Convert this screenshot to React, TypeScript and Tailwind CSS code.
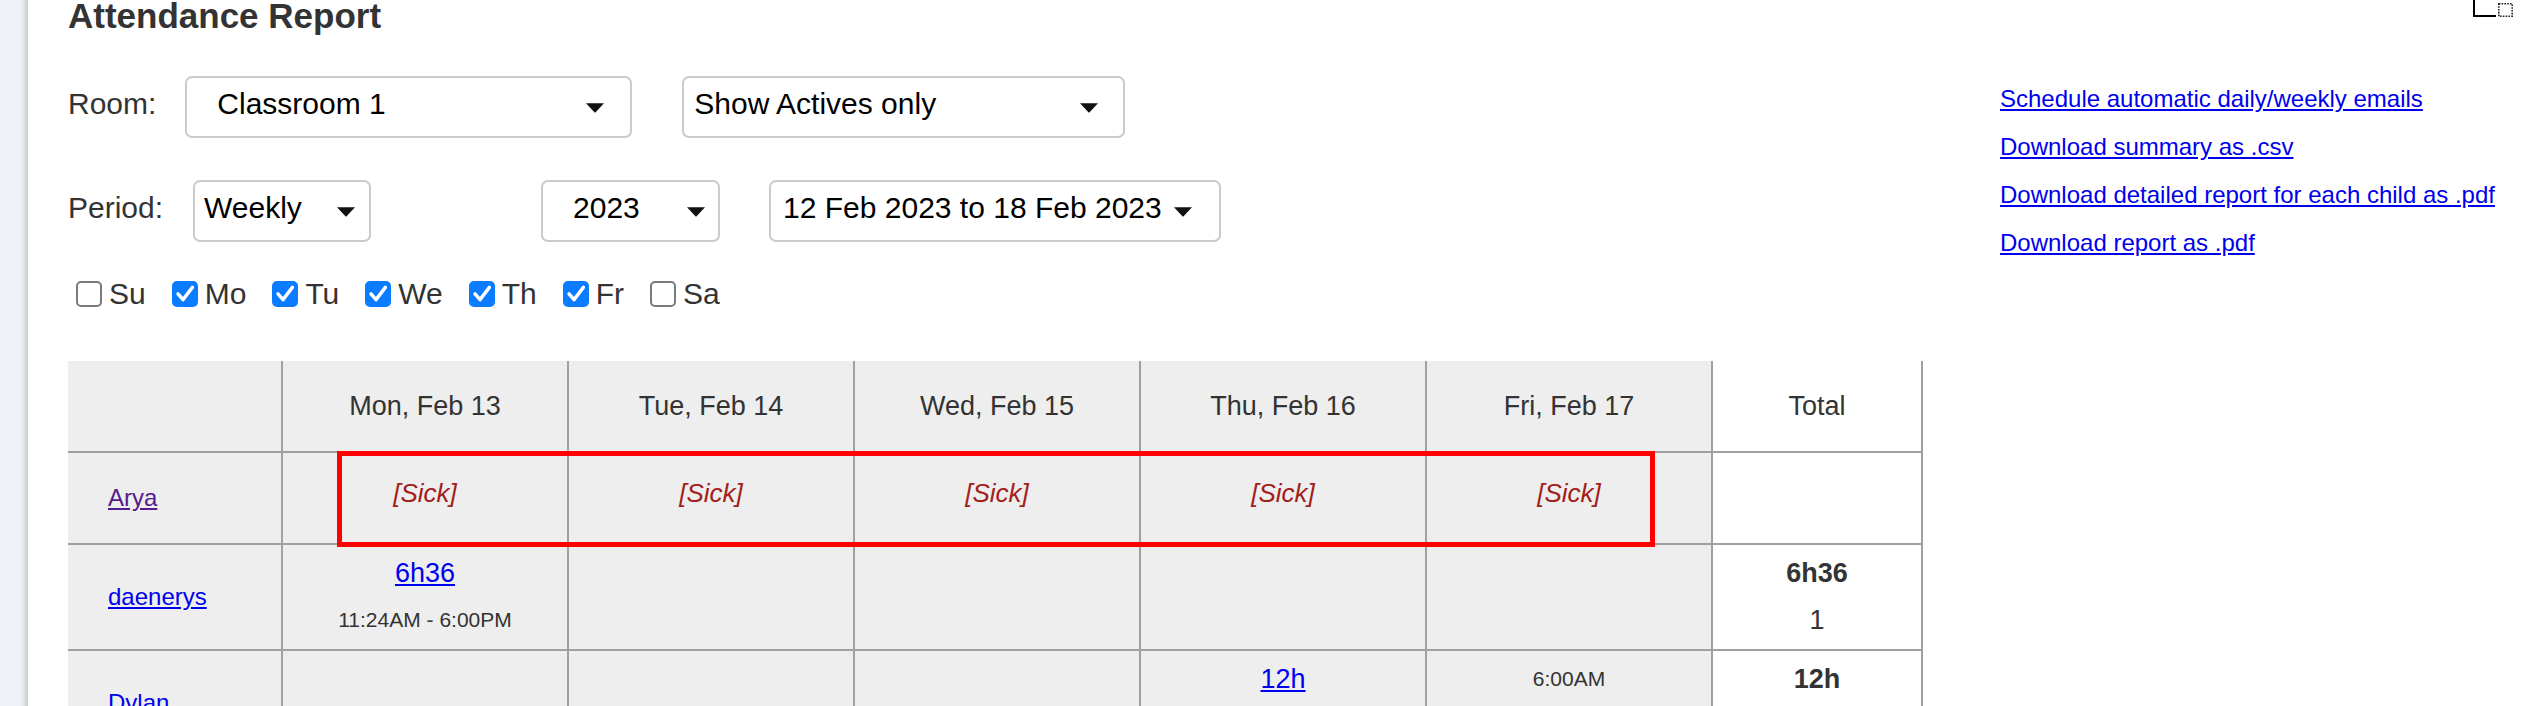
import clsx from "clsx"

const days = ["Mon, Feb 13", "Tue, Feb 14", "Wed, Feb 15", "Thu, Feb 16", "Fri, Feb 17"]

interface DayCell {
	sick?: boolean
	link?: string
	time?: string
}

interface Row {
	name: string
	visited?: boolean
	height: string
	cells: DayCell[]
	total: string[]
}

const rows: Row[] = [
	{
		name: "Arya",
		visited: true,
		height: "h-[92px]",
		cells: days.map(() => ({ sick: true })),
		total: [],
	},
	{
		name: "daenerys",
		height: "h-[106px]",
		cells: [{ link: "6h36", time: "11:24AM - 6:00PM" }, {}, {}, {}, {}],
		total: ["6h36", "1"],
	},
	{
		name: "Dylan",
		height: "h-[106px]",
		cells: [{}, {}, {}, { link: "12h" }, { time: "6:00AM" }],
		total: ["12h"],
	},
]

const links = [
	"Schedule automatic daily/weekly emails",
	"Download summary as .csv",
	"Download detailed report for each child as .pdf",
	"Download report as .pdf",
]

const weekdays = [
	{ label: "Su", checked: false },
	{ label: "Mo", checked: true },
	{ label: "Tu", checked: true },
	{ label: "We", checked: true },
	{ label: "Th", checked: true },
	{ label: "Fr", checked: true },
	{ label: "Sa", checked: false },
]

function Arrow() {
	return (
		<svg width="20" height="11" viewBox="0 0 20 11" className="shrink-0">
			<path d="M1 1.2 L19 1.2 L10.6 10.2 Q10 10.8 9.4 10.2 Z" fill="#111" />
		</svg>
	)
}

interface SelectProps {
	text: string
	className: string
	textClass: string
	arrowClass: string
}

function FakeSelect({ text, className, textClass, arrowClass }: SelectProps) {
	return (
		<div className={clsx("flex h-[62px] shrink-0 items-center rounded-[7px] border-2 border-[#cbcbcb] bg-white", className)}>
			<span className={clsx("whitespace-nowrap pb-[7px] text-[30px] leading-[34px] text-black", textClass)}>{text}</span>
			<span className={clsx("ml-auto flex", arrowClass)}>
				<Arrow />
			</span>
		</div>
	)
}

function Checkbox({ checked }: { checked: boolean }) {
	if (checked) {
		return (
			<span className="flex h-[26px] w-[26px] shrink-0 items-center justify-center rounded-[5px] bg-[#0b7bff]">
				<svg width="26" height="26" viewBox="0 0 26 26">
					<path d="M6 12.8 L11 18.6 L20.4 6.4" fill="none" stroke="white" strokeWidth="3.4" strokeLinecap="round" strokeLinejoin="round" />
				</svg>
			</span>
		)
	}
	return <span className="h-[26px] w-[26px] shrink-0 rounded-[5px] border-2 border-[#7a7a7a] bg-white" />
}

function CornerIcon() {
	return (
		<svg width="41" height="18" viewBox="0 0 41 18" className="absolute right-[8px] top-0">
			<path d="M1 0 V16 H23" fill="none" stroke="#000" strokeWidth="2" />
			<rect x="25.8" y="3.8" width="13.4" height="12.4" fill="none" stroke="#222" strokeWidth="1.6" strokeDasharray="1.6 1.2" />
		</svg>
	)
}

function DayContent({ cell }: { cell: DayCell }) {
	if (cell.sick) {
		return <span className="pt-[25px] text-[26px] italic leading-[30px] text-[#a3201a]">[Sick]</span>
	}
	return (
		<div className="flex flex-col items-center pt-[6px]">
			{cell.link && <a href="#" className="text-[27px] leading-[44px] text-[#0000ee] underline">{cell.link}</a>}
			{cell.time && (
				<span className={clsx("text-[21px] text-[#333]", cell.link ? "leading-[50px]" : "leading-[44px]")}>{cell.time}</span>
			)}
		</div>
	)
}

function AttendanceTable() {
	const cellBorder = "border-r-2 border-b-2 border-[#a0a0a0]"
	return (
		<div className="relative mt-[54px] w-[1855px]">
			<div className="grid grid-cols-[215px_286px_286px_286px_286px_286px_210px]">
				<div className={clsx("h-[92px] bg-[#eeeeee]", cellBorder)}></div>
				{days.map(d => (
					<div key={d} className={clsx("flex h-[92px] items-center justify-center bg-[#eeeeee] text-[27px] text-[#333]", cellBorder)}>
						{d}
					</div>
				))}
				<div className={clsx("flex h-[92px] items-center justify-center bg-white text-[27px] text-[#333]", cellBorder)}>Total</div>

				{rows.map(r => (
					<div className="contents" key={r.name}>
						<div className={clsx("flex items-center bg-[#eeeeee] pl-[40px]", r.height, cellBorder)}>
							<a href="#" className={clsx("text-[24px] underline", r.visited ? "text-[#551a8b]" : "text-[#0000ee]")}>{r.name}</a>
						</div>
						{r.cells.map((c, i) => (
							<div key={i} className={clsx("flex justify-center bg-[#eeeeee]", r.height, cellBorder)}>
								<DayContent cell={c} />
							</div>
						))}
						<div className={clsx("flex flex-col items-center bg-white pt-[6px] text-[27px] text-[#333]", r.height, cellBorder)}>
							{r.total.map((t, i) => (
								<span key={i} className={i === 0 ? "font-bold leading-[44px]" : "leading-[50px]"}>{t}</span>
							))}
						</div>
					</div>
				))}
			</div>
			{/* highlight drawn over the sick days */}
			<div className="pointer-events-none absolute left-[269px] top-[90px] h-[96px] w-[1318px] border-[5px] border-[#ff0000]"></div>
		</div>
	)
}

export default function App() {
	return (
		<div className="flex h-[706px] overflow-hidden bg-white font-['Liberation_Sans',Arial,Helvetica,sans-serif]">
			<div className="w-[28px] shrink-0 bg-[linear-gradient(to_right,#eef2f8_0%,#eef2f8_72%,#dcdfe4_88%,#c6c9ce_100%)]"></div>
			<div className="relative flex-1 pl-[40px]">
				<CornerIcon />
				<h1 className="-mt-[2px] text-[35px] font-bold leading-[35px] text-[#333]">Attendance Report</h1>
				<div className="flex">
					<div className="w-[1932px] shrink-0">
						<div className="mt-[43px] flex items-center">
							<span className="pb-[7px] text-[30px] leading-[34px] text-[#333]">Room:</span>
							<FakeSelect text="Classroom 1" className="ml-[29px] w-[447px]" textClass="pl-[30px]" arrowClass="mr-[25px]" />
							<FakeSelect text="Show Actives only" className="ml-[50px] w-[443px]" textClass="pl-[10px]" arrowClass="mr-[24px]" />
						</div>
						<div className="mt-[42px] flex items-center">
							<span className="pb-[7px] text-[30px] leading-[34px] text-[#333]">Period:</span>
							<FakeSelect text="Weekly" className="ml-[30px] w-[178px]" textClass="pl-[9px]" arrowClass="mr-[13px]" />
							<FakeSelect text="2023" className="ml-[170px] w-[179px]" textClass="pl-[30px]" arrowClass="mr-[12px]" />
							<FakeSelect text="12 Feb 2023 to 18 Feb 2023" className="ml-[49px] w-[452px]" textClass="pl-[12px]" arrowClass="mr-[26px]" />
						</div>
						<div className="ml-[8px] mt-[39px] flex h-[26px] items-center gap-[26px]">
							{weekdays.map(w => (
								<label key={w.label} className="flex items-center gap-[7px]">
									<Checkbox checked={w.checked} />
									<span className="text-[30px] leading-[26px] text-[#333]">{w.label}</span>
								</label>
							))}
						</div>
						<AttendanceTable />
					</div>
					<div className="flex flex-col pt-[42px]">
						{links.map(l => (
							<a key={l} href="#" className="whitespace-nowrap text-[24px] leading-[48px] text-[#0000ee] underline">{l}</a>
						))}
					</div>
				</div>
			</div>
		</div>
	)
}
